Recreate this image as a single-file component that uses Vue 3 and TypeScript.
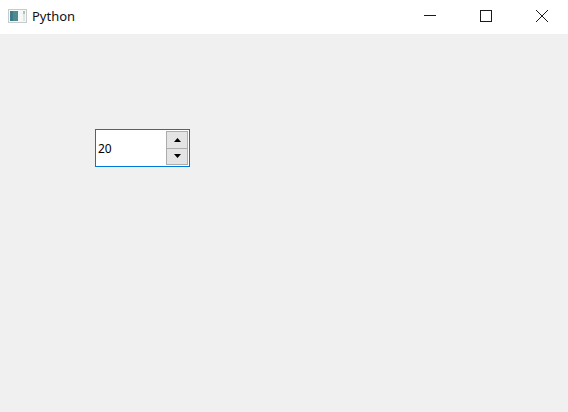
<script setup lang="ts">
const title: string = 'Python'
const value: number = 20
</script>

<template>
  <div class="window">
    <header class="titlebar">
      <svg class="app-icon" width="19" height="14" viewBox="0 0 19 14">
        <rect x="0.5" y="0.5" width="18" height="13" fill="#f6f8f8" stroke="#c6cccc" />
        <rect x="2" y="2" width="8" height="10" fill="#4d8b8e" />
        <rect x="2" y="2" width="3" height="10" fill="#3f7a8c" />
        <rect x="15" y="2" width="2" height="3" fill="#a9c4b8" />
        <rect x="15" y="5" width="2" height="7" fill="#dfe6e4" />
      </svg>
      <span class="title">{{ title }}</span>
      <div class="controls">
        <button class="ctl">
          <svg width="14" height="14" viewBox="0 0 14 14"><path d="M1 6.5H13" stroke="#1a1a1a" fill="none" /></svg>
        </button>
        <button class="ctl">
          <svg width="14" height="14" viewBox="0 0 14 14"><rect x="1.5" y="1.5" width="11" height="11" stroke="#1a1a1a" fill="none" /></svg>
        </button>
        <button class="ctl">
          <svg width="14" height="14" viewBox="0 0 14 14"><path d="M1 1L13 13M13 1L1 13" stroke="#1a1a1a" fill="none" /></svg>
        </button>
      </div>
    </header>
    <main class="content">
      <div class="spinbox">
        <span class="value">{{ value }}</span>
        <div class="buttons">
          <button class="step">
            <svg width="7" height="4" viewBox="0 0 7 4"><path d="M3.5 0L7 4H0Z" fill="#000" /></svg>
          </button>
          <button class="step">
            <svg width="7" height="4" viewBox="0 0 7 4"><path d="M0 0H7L3.5 4Z" fill="#000" /></svg>
          </button>
        </div>
      </div>
    </main>
  </div>
</template>

<style>
html, body { margin: 0; padding: 0; }
</style>

<style scoped>
.window {
  width: 568px;
  height: 412px;
  display: flex;
  flex-direction: column;
  background: #f0f0f0;
  font-family: "Noto Sans", "Open Sans", sans-serif;
  overflow: hidden;
}
.titlebar {
  height: 34px;
  flex: none;
  background: #fff;
  display: flex;
  align-items: center;
  padding-left: 8px;
  box-sizing: border-box;
}
.app-icon { flex: none; margin-right: 5px; margin-top: -2px; }
.title {
  font-size: 13px;
  line-height: 18px;
  margin-top: -2px;
  color: #111;
}
.controls {
  margin-left: auto;
  margin-right: -2px;
  display: flex;
  height: 100%;
}
.ctl {
  width: 56px;
  border: 0;
  padding: 0;
  background: transparent;
  display: flex;
  align-items: center;
  justify-content: center;
  margin-top: -2px;
}
.content {
  flex: 1;
  padding: 95px 0 0 95px;
}
.spinbox {
  width: 95px;
  height: 38px;
  box-sizing: border-box;
  border: 1px solid #0078d7;
  background: #fff;
  display: flex;
  align-items: center;
  padding: 1px 0 1px 2px;
}
.value {
  flex: 1;
  font-size: 12px;
  color: #000;
}
.buttons {
  width: 22px;
  height: 34px;
  display: flex;
  flex-direction: column;
  margin-right: 1px;
  border: 1px solid #adadad;
  box-sizing: border-box;
}
.step {
  flex: 1;
  border: 0;
  padding: 0;
  background: #e4e4e4;
  display: flex;
  align-items: center;
  justify-content: center;
}
.step + .step { border-top: 1px solid #adadad; }
</style>
